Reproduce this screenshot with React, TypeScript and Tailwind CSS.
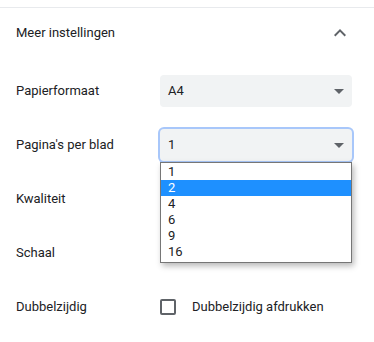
import React from 'react';

const ArrowDown: React.FC = () => (
  <svg width="24" height="24" viewBox="0 0 24 24" className="absolute right-[1px] top-1/2 -translate-y-1/2" fill="#5f6368">
    <path d="M7 10l5 5 5-5z" />
  </svg>
);

const Select: React.FC<{ value: string; focused?: boolean; children?: React.ReactNode }> = ({ value, focused, children }) => (
  <div className="relative w-[192px]">
    <div
      className={`relative h-[32px] rounded-[4px] bg-[#f1f3f4] pl-[8px] flex items-center text-[13px] text-[#202124] ${
        focused ? 'ring-2 ring-[#a8c7fa]' : ''
      }`}
    >
      {value}
      <ArrowDown />
    </div>
    {children}
  </div>
);

const Row: React.FC<{ label: string; children?: React.ReactNode }> = ({ label, children }) => (
  <div className="h-[54px] flex items-center">
    <div className="w-[160px] pl-4 text-[13px] text-[#202124]">{label}</div>
    {children}
  </div>
);

export default function App() {
  const options = ['1', '2', '4', '6', '9', '16'];
  const selected = '2';

  return (
    <div className="w-[374px] h-[342px] bg-white overflow-hidden" style={{ fontFamily: 'Roboto, "Liberation Sans", sans-serif' }}>
      <div className="h-[7px]" />
      <div className="border-t border-[#e8eaed]" />

      {/* header */}
      <div className="h-[49px] flex items-center justify-between pl-4 pr-[22px]">
        <span className="text-[13px] text-[#202124]">Meer instellingen</span>
        <svg width="24" height="24" viewBox="0 0 24 24" fill="#5f6368">
          <path d="M12 8l-6 6 1.41 1.41L12 10.83l4.59 4.58L18 14z" />
        </svg>
      </div>

      <div className="pt-[7px]">
        <Row label="Papierformaat">
          <Select value="A4" />
        </Row>
        <Row label="Pagina's per blad">
          <Select value="1" focused>
            <div className="absolute left-0 top-[33px] z-10 w-[192px] bg-white border border-[#767676] pt-[1px] pb-[2px] shadow-[2px_3px_6px_rgba(0,0,0,0.28)]">
              {options.map((o) => (
                <div
                  key={o}
                  className={`h-[16px] leading-[16px] pl-[7px] text-[13px] ${
                    o === selected ? 'bg-[#1e90ff] text-white' : 'text-[#202124]'
                  }`}
                >
                  {o}
                </div>
              ))}
            </div>
          </Select>
        </Row>
        <Row label="Kwaliteit" />
        <Row label="Schaal" />
        <Row label="Dubbelzijdig">
          <div className="flex items-center gap-4">
            <div className="w-[16px] h-[16px] rounded-[2px] border-2 border-[#5f6368]" />
            <span className="text-[13px] text-[#202124]">Dubbelzijdig afdrukken</span>
          </div>
        </Row>
      </div>
    </div>
  );
}
